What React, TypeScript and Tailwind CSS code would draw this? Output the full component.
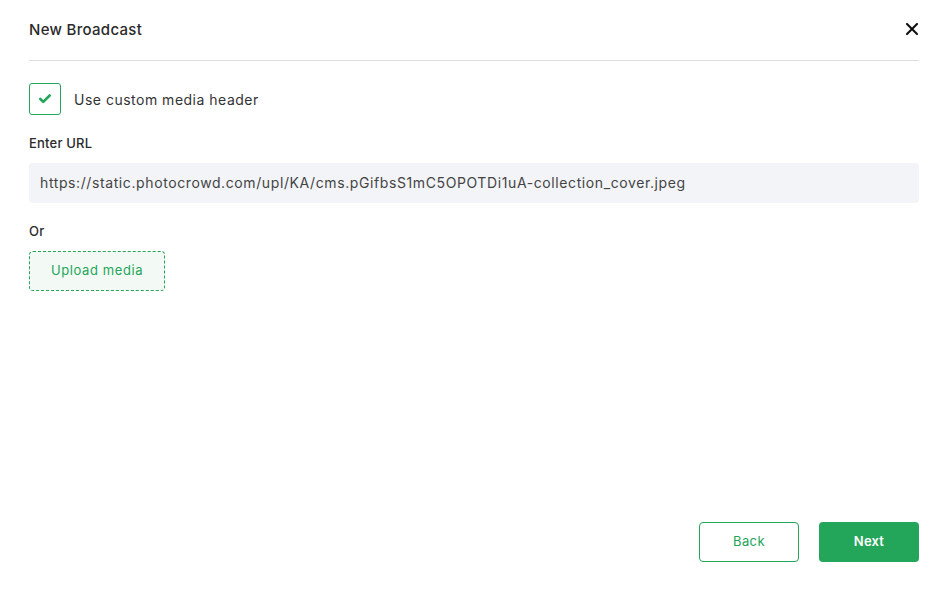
import { Check, X } from 'lucide-react';

const font = { fontFamily: 'Inter, "Open Sans", "Liberation Sans", sans-serif' };

export default function App() {
  return (
    <div className="w-[948px] h-[590px] bg-white flex flex-col px-[29px] text-[#222]" style={font}>
      <div className="h-[61px] flex items-center justify-between border-b border-[#dedede]">
        <h1 className="text-[15px] font-medium tracking-[0.3px] text-[#2a2a2a]">New Broadcast</h1>
        <button type="button" className="-mr-[3px] -mt-[3px] text-[#111]">
          <X className="h-5 w-5" strokeWidth={2.6} />
        </button>
      </div>

      <label className="mt-[22px] flex items-center gap-[13px]">
        <span className="w-8 h-8 rounded-[3px] border border-[#23a55a] flex items-center justify-center">
          <Check className="h-[14px] w-[14px] text-[#23a55a]" strokeWidth={4.5} />
        </span>
        <span className="text-[14px] tracking-[0.5px] text-[#333]">Use custom media header</span>
      </label>

      <p className="mt-[19px] text-[13px] font-medium tracking-[0.2px] text-[#2a2a2a]">Enter URL</p>
      <div className="mt-[9px] h-10 rounded-[4px] bg-[#f3f4f7] flex items-center px-[11px]">
        <span className="text-[14px] text-[#444] tracking-[0.6px]">
          https://static.photocrowd.com/upl/KA/cms.pGifbsS1mC5OPOTDi1uA-collection_cover.jpeg
        </span>
      </div>

      <p className="mt-[19px] text-[13px] font-medium tracking-[0.2px] text-[#2a2a2a]">Or</p>
      <button
        type="button"
        className="mt-[10px] w-[136px] h-10 rounded-[4px] border border-dashed border-[#23a55a] bg-[#f3faf5] text-[13px] tracking-[0.6px] text-[#23a55a]"
      >
        Upload media
      </button>

      <div className="mt-auto mb-[28px] flex justify-end gap-5">
        <button
          type="button"
          className="w-[100px] h-10 rounded-[4px] border border-[#23a55a] bg-white text-[13px] tracking-[0.4px] text-[#23a55a]"
        >
          Back
        </button>
        <button
          type="button"
          className="w-[100px] h-10 rounded-[4px] bg-[#23a55a] text-[13px] font-semibold tracking-[0.2px] text-white"
        >
          Next
        </button>
      </div>
    </div>
  );
}
